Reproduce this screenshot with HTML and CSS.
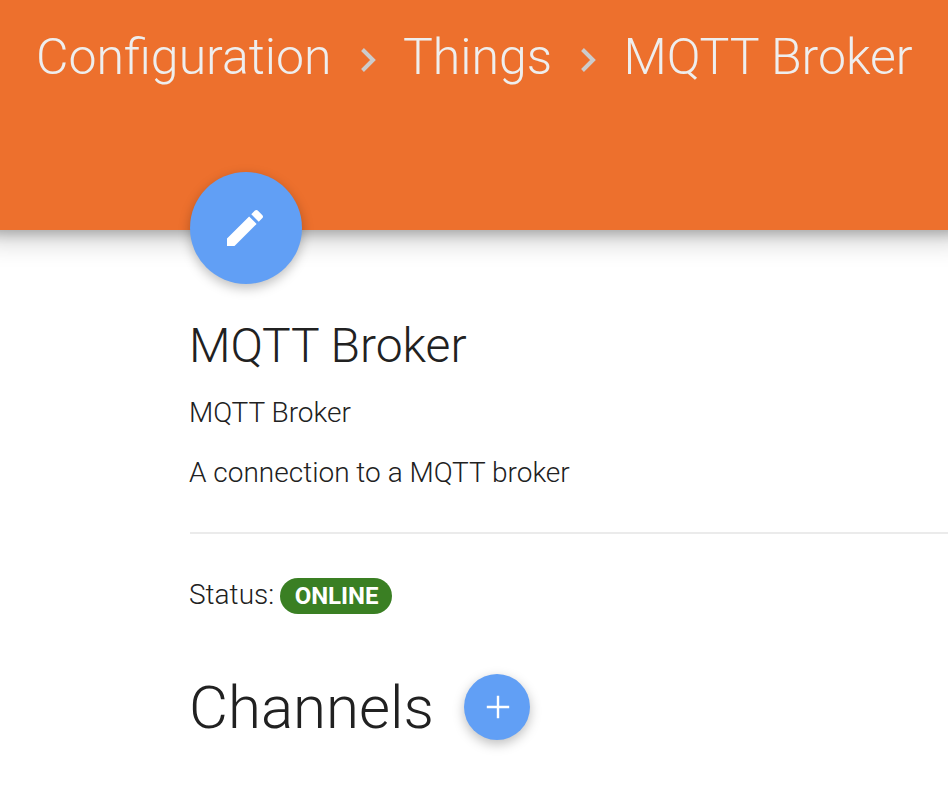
FILE: index.html
```html
<!DOCTYPE html>
<html lang="en">
<head>
<meta charset="utf-8">
<title>MQTT Broker</title>
<link rel="stylesheet" href="styles.css">
</head>
<body>
<header class="toolbar">
  <nav class="breadcrumb">
    <span>Configuration</span>
    <svg class="chevron" viewBox="0 0 15 24"><path d="M1.5 1.5 12 12 1.5 22.5"/></svg>
    <span>Things</span>
    <svg class="chevron" viewBox="0 0 15 24"><path d="M1.5 1.5 12 12 1.5 22.5"/></svg>
    <span>MQTT Broker</span>
  </nav>
</header>
<main class="content">
  <button class="fab edit" aria-label="Edit"><svg viewBox="0 0 24 24"><path d="M3 17.25V21h3.75L17.81 9.94l-3.75-3.75L3 17.25zM20.71 7.04c.39-.39.39-1.02 0-1.41l-2.34-2.34c-.39-.39-1.02-.39-1.41 0l-1.83 1.83 3.75 3.75 1.83-1.83z"/></svg></button>
  <h1 class="title">MQTT Broker</h1>
  <p class="text">MQTT Broker</p>
  <p class="text">A connection to a MQTT broker</p>
  <hr class="divider">
  <div class="status"><span class="label">Status:</span><span class="badge">ONLINE</span></div>
  <div class="channels"><h2>Channels</h2><button class="fab add" aria-label="Add channel"><svg viewBox="0 0 24 24"><path d="M12 .8v22.4M.8 12h22.4"/></svg></button></div>
</main>
</body>
</html>
```
FILE: styles.css
```css
* { box-sizing: border-box; }
body { margin: 0; height: 808px; overflow: hidden; background: #fff; color: #212121; font-family: Roboto, sans-serif; font-weight: 300; }
.toolbar { height: 230px; background: #ed702d; box-shadow: 0 -16px 10px 20px rgba(0,0,0,.16), 0 -15px 28px 20px rgba(0,0,0,.3); padding: 27px 0 0 36px; }
.breadcrumb { display: flex; align-items: center; height: 60px; color: #eee; font-size: 50px; line-height: 60px; white-space: nowrap; }
.chevron { flex: none; width: 15px; height: 24px; margin: 6px 27.3px 0 29.1px; fill: none; stroke: #ccc; stroke-width: 4; }
.content { padding-left: 189px; }
.fab { display: flex; align-items: center; justify-content: center; padding: 0; border: 0; border-radius: 50%; background: #619ff5; box-shadow: 0 4px 12px rgba(0,0,0,.26); }
.edit { position: relative; width: 112px; height: 112px; margin: -58px 0 0 1px; }
.edit svg { width: 48px; height: 48px; margin-right: 2px; fill: #fff; }
.title { margin: 32px 0 0; font-size: 48px; line-height: 60px; font-weight: 300; }
.text { margin: 0; font-size: 28px; line-height: 60px; height: 60px; }
.title + .text { margin-top: 7px; }
.divider { height: 2px; margin: 29px 0 44px 1px; border: 0; background: #ebebeb; }
.status { display: flex; height: 36px; font-size: 28px; gap: 6px; }
.label { line-height: 33px; }
.badge { width: 112px; height: 36px; border-radius: 18px; background: #3a7f23; color: #fff; font-size: 24px; line-height: 36px; font-weight: 700; text-align: center; padding-left: 1px; }
.channels { display: flex; align-items: center; height: 66px; margin-top: 60px; gap: 30px; }
.channels h2 { margin: 0; font-size: 60px; font-weight: 300; line-height: 66px; padding-top: 2px; }
.add { width: 66px; height: 66px; }
.add svg { width: 24px; height: 24px; margin-left: 2px; fill: none; stroke: #fff; stroke-width: 2.4; }
```
